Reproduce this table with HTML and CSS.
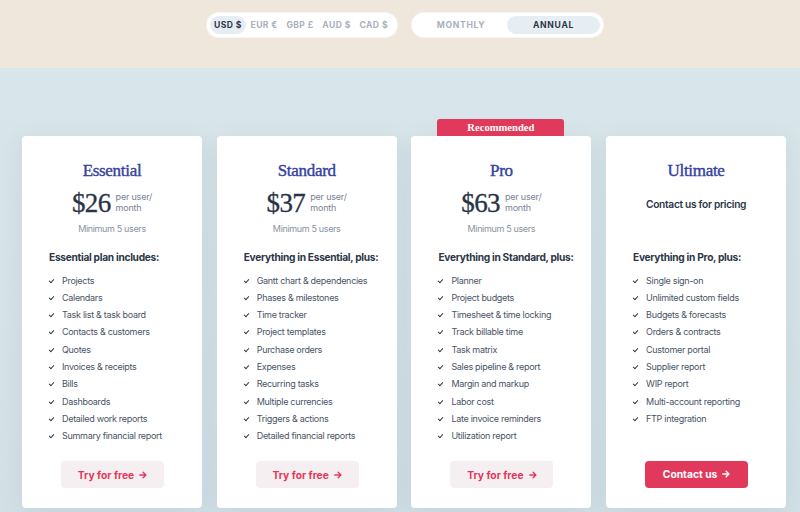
FILE: index.html
```html
<!DOCTYPE html>
<html>
<head>
<meta charset="utf-8">
<link rel="stylesheet" href="styles.css">
</head>
<body>
<header class="top">
  <div class="pill currency">
    <span class="opt active">USD $</span>
    <span class="opt">EUR €</span>
    <span class="opt">GBP £</span>
    <span class="opt">AUD $</span>
    <span class="opt">CAD $</span>
  </div>
  <div class="pill period">
    <span class="per">MONTHLY</span>
    <span class="per active">ANNUAL</span>
  </div>
</header>
<main class="plans">
  <section class="card">
    <h2 class="name">Essential</h2>
    <div class="price"><span class="amount">$26</span><span class="unit">per user/<br>month</span></div>
    <div class="min">Minimum 5 users</div>
    <h3 class="inc">Essential plan includes:</h3>
    <ul class="feats">
      <li>Projects</li><li>Calendars</li><li>Task list &amp; task board</li><li>Contacts &amp; customers</li><li>Quotes</li><li>Invoices &amp; receipts</li><li>Bills</li><li>Dashboards</li><li>Detailed work reports</li><li>Summary financial report</li>
    </ul>
    <a class="btn soft">Try for free <svg class="arr" viewBox="0 0 10 10"><path d="M1 5h7.5M5.2 1.6 8.6 5 5.2 8.4" fill="none" stroke="currentColor" stroke-width="1.7" stroke-linecap="round" stroke-linejoin="round"/></svg></a>
  </section>
  <section class="card">
    <h2 class="name">Standard</h2>
    <div class="price"><span class="amount">$37</span><span class="unit">per user/<br>month</span></div>
    <div class="min">Minimum 5 users</div>
    <h3 class="inc">Everything in Essential, plus:</h3>
    <ul class="feats">
      <li>Gantt chart &amp; dependencies</li><li>Phases &amp; milestones</li><li>Time tracker</li><li>Project templates</li><li>Purchase orders</li><li>Expenses</li><li>Recurring tasks</li><li>Multiple currencies</li><li>Triggers &amp; actions</li><li>Detailed financial reports</li>
    </ul>
    <a class="btn soft">Try for free <svg class="arr" viewBox="0 0 10 10"><path d="M1 5h7.5M5.2 1.6 8.6 5 5.2 8.4" fill="none" stroke="currentColor" stroke-width="1.7" stroke-linecap="round" stroke-linejoin="round"/></svg></a>
  </section>
  <section class="card pro">
    <div class="ribbon">Recommended</div>
    <h2 class="name">Pro</h2>
    <div class="price"><span class="amount">$63</span><span class="unit">per user/<br>month</span></div>
    <div class="min">Minimum 5 users</div>
    <h3 class="inc">Everything in Standard, plus:</h3>
    <ul class="feats">
      <li>Planner</li><li>Project budgets</li><li>Timesheet &amp; time locking</li><li>Track billable time</li><li>Task matrix</li><li>Sales pipeline &amp; report</li><li>Margin and markup</li><li>Labor cost</li><li>Late invoice reminders</li><li>Utilization report</li>
    </ul>
    <a class="btn soft">Try for free <svg class="arr" viewBox="0 0 10 10"><path d="M1 5h7.5M5.2 1.6 8.6 5 5.2 8.4" fill="none" stroke="currentColor" stroke-width="1.7" stroke-linecap="round" stroke-linejoin="round"/></svg></a>
  </section>
  <section class="card ult">
    <h2 class="name">Ultimate</h2>
    <div class="price"><span class="contact">Contact us for pricing</span></div>
    <div class="min"></div>
    <h3 class="inc">Everything in Pro, plus:</h3>
    <ul class="feats">
      <li>Single sign-on</li><li>Unlimited custom fields</li><li>Budgets &amp; forecasts</li><li>Orders &amp; contracts</li><li>Customer portal</li><li>Supplier report</li><li>WIP report</li><li>Multi-account reporting</li><li>FTP integration</li>
    </ul>
    <a class="btn solid">Contact us <svg class="arr" viewBox="0 0 10 10"><path d="M1 5h7.5M5.2 1.6 8.6 5 5.2 8.4" fill="none" stroke="currentColor" stroke-width="1.7" stroke-linecap="round" stroke-linejoin="round"/></svg></a>
  </section>
</main>
</body>
</html>
```
FILE: styles.css
```css
* { box-sizing: border-box; }
html, body { margin: 0; padding: 0; }
body {
  width: 800px;
  height: 512px;
  overflow: hidden;
  font-family: Inter, "Noto Sans", sans-serif;
  background: linear-gradient(180deg, #d9e6eb 0%, #d3e1e7 100%);
  color: #2d3748;
}
.top {
  height: 68px;
  background: #efe7dc;
  display: flex;
  justify-content: center;
  align-items: flex-start;
  gap: 15px;
  padding-top: 13px;
  padding-left: 10px;
}
.pill {
  background: #fff;
  border-radius: 12px;
  height: 24px;
  display: flex;
  align-items: center;
  padding: 0 3px;
  box-shadow: 0 0 0 1px rgba(255,255,255,0.6);
}
.currency { width: 190px; justify-content: space-between; padding: 0 5px 0 3px; }
.opt {
  white-space: nowrap;
  font-size: 8.6px;
  font-weight: 700;
  color: #a9b0bb;
  letter-spacing: 0.4px;
  padding: 0 4px;
  height: 18px;
  line-height: 18px;
  border-radius: 9px;
}
.opt.active { background: #e7eef3; color: #2d3748; }
.period { width: 191px; justify-content: space-between; }
.per {
  white-space: nowrap;
  font-size: 8.6px;
  font-weight: 700;
  letter-spacing: 0.7px;
  color: #a9b0bb;
  height: 18px;
  line-height: 18px;
  border-radius: 9px;
  text-align: center;
}
.per:first-child { width: 92px; }
.per.active { width: 93px; background: #e7eef3; color: #2d3748; }

.plans {
  display: grid;
  grid-template-columns: repeat(4, 180px);
  column-gap: 14.7px;
  padding: 68px 0 0 22px;
}
.card {
  position: relative;
  background: #fff;
  border-radius: 4px;
  height: 372px;
  padding: 24px 0 0 27px;
  box-shadow: 0 6px 24px rgba(60, 90, 110, 0.10);
}
.ribbon {
  position: absolute;
  top: -17px;
  left: 26px;
  width: 127px;
  height: 17px;
  background: #e1395b;
  border-radius: 3px 3px 0 0;
  color: #fff;
  font-family: "Liberation Serif", "DejaVu Serif", serif;
  font-weight: 700;
  font-size: 10.6px;
  line-height: 17px;
  text-align: center;
}
.name {
  margin: 0 0 0 -27px;
  font-family: "Liberation Serif", "DejaVu Serif", serif;
  font-weight: 400;
  font-size: 17px;
  letter-spacing: -0.3px;
  -webkit-text-stroke: 0.4px #3442a0;
  line-height: 22px;
  color: #3442a0;
  text-align: center;
}
.price {
  margin: 6px 0 0 -27px;
  height: 30px;
  display: flex;
  justify-content: center;
  align-items: center;
  gap: 5px;
}
.amount {
  font-family: "Liberation Serif", "DejaVu Serif", serif;
  font-size: 27px;
  line-height: 30px;
  color: #2a3346;
  letter-spacing: -0.6px;
  -webkit-text-stroke: 0.3px #2a3346;
}
.unit {
  font-size: 9px;
  letter-spacing: -0.2px;
  line-height: 11px;
  color: #7a8394;
  margin-top: -3px;
}
.contact {
  font-size: 10.2px;
  letter-spacing: -0.3px;
  font-weight: 600;
  color: #2d3748;
  margin-top: 2px;
}
.min {
  margin: 4px 0 0 -27px;
  height: 14px;
  font-size: 9px;
  letter-spacing: -0.35px;
  line-height: 14px;
  color: #8a93a3;
  text-align: center;
}
.inc {
  margin: 13px 0 0 0;
  font-size: 10.2px;
  letter-spacing: -0.3px;
  line-height: 16px;
  font-weight: 700;
  color: #2d3748;
}
.feats {
  list-style: none;
  margin: 6.5px 0 0 0;
  padding: 0;
  height: 173px;
}
.feats li {
  position: relative;
  height: 17.3px;
  line-height: 17.3px;
  font-size: 9px;
  letter-spacing: -0.3px;
  color: #4a5466;
  padding-left: 13px;
  white-space: nowrap;
}
.feats li::before {
  content: "";
  position: absolute;
  left: 0;
  top: 7px;
  width: 4px;
  height: 2px;
  border-left: 1.4px solid #2d3748;
  border-bottom: 1.4px solid #2d3748;
  transform: rotate(-48deg);
}
.btn {
  display: flex;
  align-items: center;
  justify-content: center;
  gap: 5px;
  width: 103px;
  height: 27px;
  margin: 16.5px 0 0 12px;
  border-radius: 4px;
  font-size: 10.3px;
  font-weight: 700;
  text-decoration: none;
  white-space: nowrap;
}
.btn.soft { background: #f6eff1; color: #e1395b; }
.btn.solid { background: #e1395b; color: #fff; }
.arr { width: 8px; height: 8px; }
.ult .btn { margin-top: 33.8px; }
.ult .feats { height: auto; }
```
